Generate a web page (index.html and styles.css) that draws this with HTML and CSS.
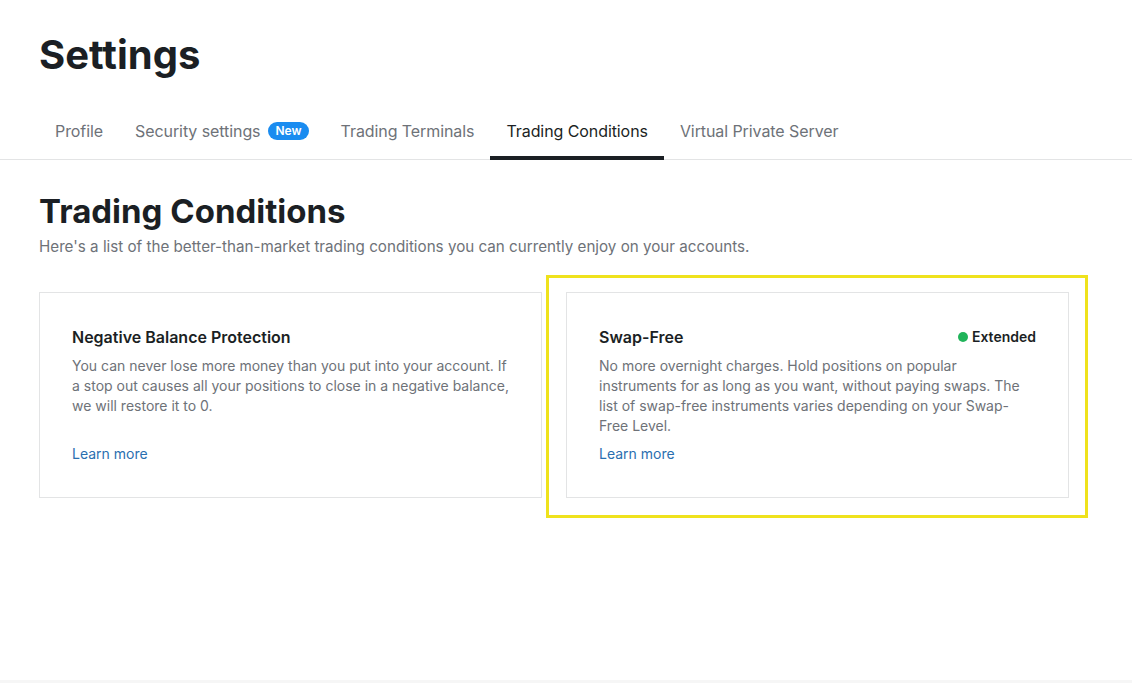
FILE: index.html
```html
<!DOCTYPE html>
<html lang="en">
<head>
<meta charset="utf-8">
<title>Settings</title>
<link rel="stylesheet" href="styles.css">
</head>
<body>
<div class="page">
  <header class="header">
    <h1 class="page-title">Settings</h1>
    <nav class="tabs">
      <a class="tab">Profile</a>
      <a class="tab">Security settings <span class="badge-new">New</span></a>
      <a class="tab">Trading Terminals</a>
      <a class="tab active">Trading Conditions</a>
      <a class="tab">Virtual Private Server</a>
    </nav>
  </header>
  <main class="content">
    <h2 class="section-title">Trading Conditions</h2>
    <p class="section-sub">Here's a list of the better-than-market trading conditions you can currently enjoy on your accounts.</p>
    <div class="cards">
      <div class="card">
        <div class="card-head">
          <h3 class="card-title">Negative Balance Protection</h3>
        </div>
        <p class="card-desc">You can never lose more money than you put into your account. If a stop out causes all your positions to close in a negative balance, we will restore it to 0.</p>
        <a class="card-link">Learn more</a>
      </div>
      <div class="card highlighted">
        <div class="card-head">
          <h3 class="card-title">Swap-Free</h3>
          <span class="status"><span class="dot"></span>Extended</span>
        </div>
        <p class="card-desc">No more overnight charges. Hold positions on popular instruments for as long as you want, without paying swaps. The list of swap-free instruments varies depending on your Swap-Free Level.</p>
        <a class="card-link">Learn more</a>
      </div>
    </div>
  </main>
</div>
</body>
</html>
```

FILE: styles.css
```css
* { box-sizing: border-box; }
html, body { margin: 0; padding: 0; }
body {
  background: #f6f6f6;
  font-family: Inter, "Noto Sans", sans-serif;
  color: #1b1f24;
}
.page {
  background: #fff;
  height: 680px;
}
.header {
  border-bottom: 1px solid #e3e4e5;
}
.page-title {
  margin: 0;
  padding: 31px 0 0 39px;
  font-size: 40px;
  line-height: 48px;
  font-weight: 700;
}
.tabs {
  display: flex;
  padding: 29px 0 0 39px;
  margin-bottom: -1px;
}
.tab {
  display: flex;
  align-items: center;
  gap: 8px;
  padding: 11px 16px 13px;
  font-size: 16px;
  line-height: 24px;
  letter-spacing: -0.08px;
  color: #6e7278;
  border-bottom: 4px solid transparent;
}
.tab.active {
  color: #1b1f24;
  border-bottom-color: #1b1f24;
}
.badge-new {
  display: inline-block;
  background: #1a8cf0;
  color: #fff;
  font-size: 12px;
  font-weight: 600;
  line-height: 18px;
  letter-spacing: 0;
  padding: 0 7px;
  border-radius: 9px;
}
.content {
  padding: 31px 40px 0 39px;
}
.section-title {
  margin: 0;
  font-size: 33px;
  line-height: 40px;
  font-weight: 700;
}
.section-sub {
  margin: 4px 0 0;
  font-size: 15.2px;
  line-height: 24px;
  color: #6e7278;
}
.cards {
  display: grid;
  grid-template-columns: 503px 503px;
  gap: 24px;
  margin-top: 33px;
}
.card {
  position: relative;
  border: 1px solid #e3e4e5;
  padding: 32px 32px 33px 32px;
  display: flex;
  flex-direction: column;
}
.card.highlighted::after {
  content: "";
  position: absolute;
  top: -18px;
  left: -21px;
  right: -20px;
  bottom: -21px;
  border: 3px solid #efe21c;
  pointer-events: none;
}
.card-head {
  display: flex;
  justify-content: space-between;
  align-items: center;
}
.card-title {
  margin: 0;
  font-size: 16px;
  line-height: 24px;
  font-weight: 600;
}
.status {
  display: flex;
  align-items: center;
  gap: 4px;
  font-size: 14px;
  font-weight: 600;
  line-height: 20px;
}
.dot {
  width: 10px;
  height: 10px;
  border-radius: 50%;
  background: #20b45a;
}
.card-desc {
  margin: 7px 0 0;
  min-height: 80px;
  font-size: 14px;
  line-height: 20px;
  color: #6e7278;
}
.card-link {
  margin-top: 8px;
  font-size: 14px;
  line-height: 20px;
  color: #2a6fb0;
}
```
